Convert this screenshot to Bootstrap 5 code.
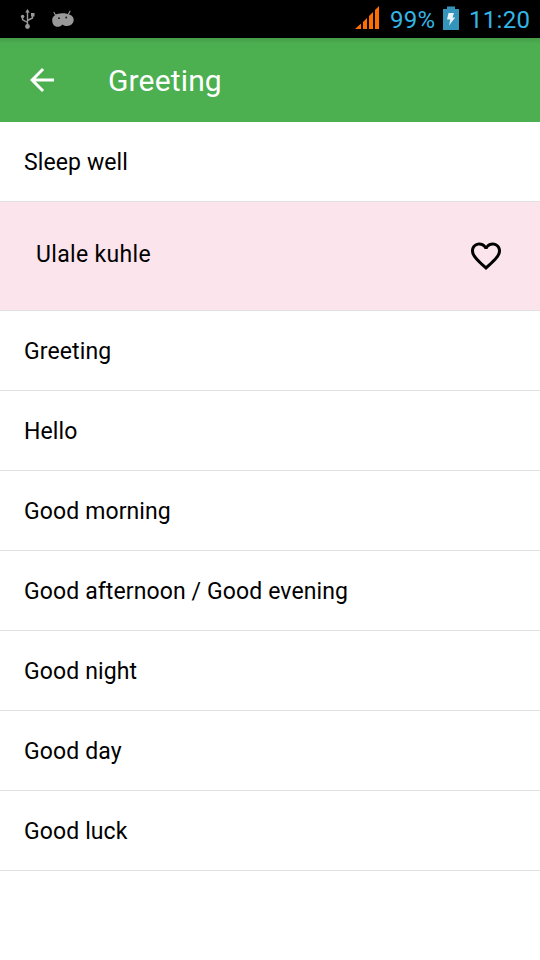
<!DOCTYPE html>
<html lang="en">
<head>
<meta charset="utf-8">
<meta name="viewport" content="width=device-width, initial-scale=1">
<title>Greeting</title>
<link href="https://cdn.jsdelivr.net/npm/bootstrap@5.3.0/dist/css/bootstrap.min.css" rel="stylesheet">
<style>
body{font-family:Roboto,"Noto Sans",sans-serif;color:#000;background:#fff;min-height:960px;overflow:hidden}
svg{display:block;flex:none}
.status{height:38px;background:#000;color:#33b5e5;font-size:24px;line-height:36px;padding:0 9px 0 20px}
.level,.clock{padding-top:2px;white-space:nowrap;letter-spacing:.3px}
.level{width:53px;margin-left:10px}
.clock{width:62px;margin-left:10px}
.appbar{height:84px;background:linear-gradient(#469d49,#4caf50 6px);color:#fff;padding-left:24px}
.appbar h1{font-size:30px;font-weight:400;line-height:36px;margin-left:48px;letter-spacing:.15px;padding-top:1px}
.phrases{border-radius:0}
.phrases .phrase{height:80px;padding:2px 24px 0;border:0;border-bottom:1px solid #e1e1e1;border-radius:0;font-size:23px;line-height:30px;letter-spacing:.11px;color:#000}
.phrases .answer{height:109px;background:#fce4ec;padding:0 36px;letter-spacing:.33px}
.answer span{padding-bottom:2px}
</style>
</head>
<body>
<header>
<div class="status d-flex align-items-center">
<svg width="15" height="38" viewBox="20 0 15 38" aria-label="USB"><path d="M27.500 12V25M22.500 17v2.500l5 3M32.500 15v3l-5 2.500" fill="none" stroke="#999" stroke-width="1.400"/><g fill="#999"><path d="M27.500 9l2.300 3.600h-4.600z"/><circle cx="27.500" cy="26.500" r="2.400"/><path d="M31 13h3.500v3.500H31z"/><circle cx="22.600" cy="16.500" r="1.800"/></g></svg>
<svg class="ms-3" width="24" height="38" viewBox="51 0 24 38" aria-label="Debugging"><path d="M55.500 15l-1.500-2.500M68.500 14l1.500-2.800" stroke="#999" stroke-width="1.200" stroke-linecap="round"/><path d="M52.200 20c0-4 4-6.800 10-6.800 6.500 0 11.500 2.300 11.500 6.400 0 4-3 6.400-6.700 6.400-1.800 0-3.200-.5-4.500-1.500-1.300 1.500-3 2.300-5 2.300-3.200 0-5.300-2.400-5.300-6.800z" fill="#999"/><circle cx="59" cy="18.200" r=".9" fill="#111"/><circle cx="66.200" cy="17.500" r=".9" fill="#111"/></svg>
<svg class="ms-auto" width="25" height="38" viewBox="355 0 25 38" fill="#ff6d00" aria-label="Signal"><path d="M355 29h6v-5.500zM363 29h4V18l-4 4zM369 29h4V12l-4 4zM375 29h4V6l-4 4z"/></svg>
<span class="level">99%</span>
<svg width="16" height="38" viewBox="443 0 16 38" aria-label="Charging"><path d="M443 9h4V6.500h8V9h4v21h-16z" fill="#3594bb"/><path d="M448.500 13h5.500l-1.500 4.500h2.700L449 25.500l1.300-6H447z" fill="#e7f4f8"/></svg>
<span class="clock">11:20</span>
</div>
<nav class="appbar d-flex align-items-center">
<svg width="36" height="36" viewBox="0 0 24 24" fill="#fff" aria-label="Back"><path d="M20 11H7.830l5.590-5.590L12 4l-8 8 8 8 1.410-1.410L7.830 13H20z"/></svg>
<h1 class="mb-0">Greeting</h1>
</nav>
</header>
<main class="list-group phrases">
<div class="list-group-item phrase d-flex align-items-center">Sleep well</div>
<div class="list-group-item phrase answer d-flex align-items-center justify-content-between"><span>Ulale kuhle</span>
<svg width="36" height="36" viewBox="0 0 24 24" aria-label="Favourite"><path d="M16.500 3c-1.740 0-3.410.810-4.500 2.090C10.910 3.810 9.240 3 7.500 3 4.420 3 2 5.420 2 8.500c0 3.780 3.400 6.860 8.550 11.540L12 21.350l1.450-1.320C18.600 15.360 22 12.280 22 8.500 22 5.420 19.580 3 16.500 3zm-4.400 15.550l-.1.100-.1-.1C7.140 14.240 4 11.390 4 8.500 4 6.500 5.500 5 7.500 5c1.540 0 3.040.990 3.570 2.360h1.870C13.460 5.990 14.960 5 16.500 5c2 0 3.500 1.500 3.500 3.500 0 2.890-3.140 5.740-7.900 10.050z"/></svg></div>
<div class="list-group-item phrase d-flex align-items-center">Greeting</div>
<div class="list-group-item phrase d-flex align-items-center">Hello</div>
<div class="list-group-item phrase d-flex align-items-center">Good morning</div>
<div class="list-group-item phrase d-flex align-items-center">Good afternoon / Good evening</div>
<div class="list-group-item phrase d-flex align-items-center">Good night</div>
<div class="list-group-item phrase d-flex align-items-center">Good day</div>
<div class="list-group-item phrase d-flex align-items-center">Good luck</div>
</main>
<script src="https://cdn.jsdelivr.net/npm/bootstrap@5.3.0/dist/js/bootstrap.bundle.min.js"></script>
</body>
</html>
